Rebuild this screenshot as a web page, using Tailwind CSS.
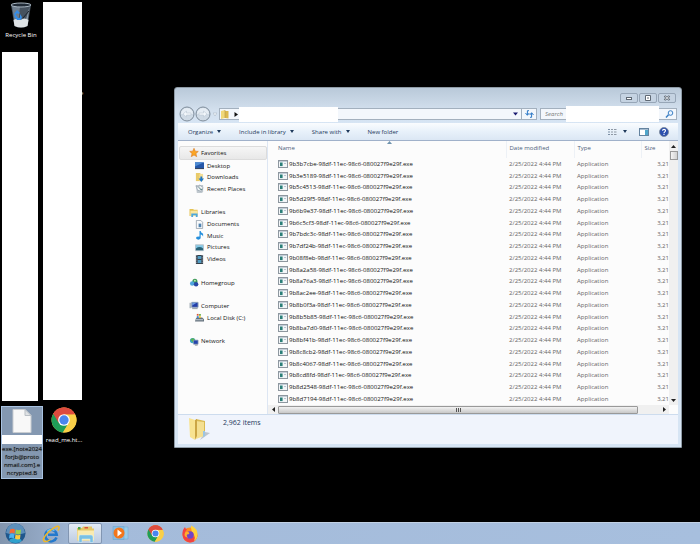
<!DOCTYPE html>
<html lang="en">
<head>
    <meta charset="UTF-8">
    <meta name="viewport" content="width=device-width, initial-scale=1.0">
    <title>Desktop</title>
    <script src="https://cdn.jsdelivr.net/npm/@tailwindcss/browser@4"></script>
</head>
<body class="bg-black min-h-screen flex flex-col overflow-hidden font-['Open_Sans',sans-serif] font-medium text-[6px] leading-[10px] text-black">

    <!-- Shared icons -->
    <svg class="hidden">
        <symbol id="chrome" viewBox="0 0 48 48">
            <circle cx="24" cy="24" r="23" fill="#f6c944"/>
            <path d="M24 24 4.1 12.5A23 23 0 0 1 43.9 12.5Z" fill="#dd4b3e"/>
            <path d="M4.1 12.5A23 23 0 0 0 22 47L33 29 24 24Z" fill="#1f9d58"/>
            <path d="M24 13.5H44.5A23 23 0 0 1 22 47L33 29Z" fill="#f9cf48"/>
            <path d="M4.1 12.5A23 23 0 0 1 44.5 13.5H24L14 29Z" fill="#dd4b3e"/>
            <circle cx="24" cy="24" r="10.8" fill="#fff"/>
            <circle cx="24" cy="24" r="8.6" fill="#4a86ee"/>
        </symbol>
        <symbol id="exe" viewBox="0 0 10 8">
            <rect x=".5" y=".5" width="9" height="7" fill="#f3f6f8" stroke="#8e979f"/>
            <rect x="1" y="1" width="8" height="1" fill="#c4ced8"/>
            <rect x="2" y="2.5" width="2.6" height="3.6" fill="#2b7f78"/>
            <rect x="6" y="3" width="2" height="1" fill="#b9c4d2"/>
        </symbol>
    </svg>

    <main class="relative flex-1">
        <!-- Desktop icons -->
        <a href="#" class="absolute left-[1px] top-[2px] w-10 flex flex-col items-center gap-[2px] text-white text-center">
            <svg class="w-6 h-[26px]" viewBox="0 0 24 26">
                <path d="M2 3h20l-3.5 21q-6.500 3-13 0Z" fill="#46525f"/>
                <path d="M3 4h8L9 24l-3-1Z" fill="#8292a2" opacity=".7"/>
                <path d="M20.500 5 15 24l3-1Z" fill="#9aa8b5" opacity=".8"/>
                <ellipse cx="12" cy="3" rx="10" ry="2" fill="#202a36" stroke="#a9b6c2"/>
                <path d="M4.500 18q3-2 7 0 4-3 8 0l-1 6q-6.500 3-13 0Z" fill="#dfe3e6"/>
                <path d="m5 12 3-4 3 3-2 1-1-1-2 3ZM5 14l2-1 2 3h2v2H8ZM11 12l2 3-1 3-2-1 1-2Z" fill="#348de8"/>
                <path d="m20 9-6 7" stroke="#1b222b"/>
            </svg>
            <span class="whitespace-nowrap">Recycle Bin</span>
        </a>
        <div class="absolute left-[2px] top-[52px] w-9 h-[349px] bg-white"></div>
        <span class="absolute left-20 top-[88px] text-[#ccc]">e</span>
        <div class="absolute left-[43px] top-[2px] w-[39px] h-[398px] bg-white"></div>

        <a href="#" class="absolute left-[1px] top-[406px] w-[42px] h-[73px] flex flex-col items-center pt-[2px] bg-[#8498b1] border border-[#a9c3e2] text-center">
            <svg class="w-5 h-6 shrink-0" viewBox="0 0 20 24">
                <path d="M1 .5h12l6 6v17H1Z" fill="#f8f8f8" stroke="#c9cdd1"/>
                <path d="M13 .5v6h6Z" fill="#dfe2e5" stroke="#b9bfc5"/>
            </svg>
            <span class="w-full h-[9px] mt-[2px] bg-white shrink-0"></span>
            <span class="leading-[8px] pt-[1px] whitespace-nowrap text-[#0a1320] [text-shadow:0_0_1px_#000,0_0_1px_#fff]">exe.[note2024<br>forjb@proto<br>nmail.com].e<br>ncrypted.B</span>
        </a>
        <a href="#" class="absolute left-[43px] top-[407px] w-[42px] flex flex-col items-center gap-[2px] text-white">
            <svg class="w-[26px] h-[26px]"><use href="#chrome"/></svg>
            <span class="whitespace-nowrap">read_me.ht...</span>
        </a>

        <!-- Explorer window -->
        <section class="absolute left-[174px] right-[18px] top-[87px] flex flex-col rounded-t-[3px] border border-[#8f9ba6] px-[3px] pb-[3px] bg-linear-to-b from-[#b9c9d9] from-0% via-[#d2dfed] via-6% to-[#d7e5f4] to-10%">
            <header class="flex justify-end items-center gap-[1px] h-[17px] pt-[3px] pr-[2px]">
                <button aria-label="Minimize" class="w-[18px] h-[10px] rounded-[2px] border border-[#97a6b7] bg-[#c5d3e2] flex items-center justify-center"><svg class="w-2 h-2" viewBox="0 0 8 8"><rect x="1.500" y="3.500" width="5" height="2" fill="#fff" stroke="#5f6974"/></svg></button>
                <button aria-label="Maximize" class="w-[18px] h-[10px] rounded-[2px] border border-[#97a6b7] bg-[#c5d3e2] flex items-center justify-center"><svg class="w-2 h-2" viewBox="0 0 8 8"><path d="M1.500 1.500h5v5h-5ZM3 4h2" fill="#fff" stroke="#5f6974"/></svg></button>
                <button aria-label="Close" class="w-[18px] h-[10px] rounded-[2px] border border-[#97a6b7] bg-[#c5d3e2] flex items-center justify-center"><svg class="w-2 h-2" viewBox="0 0 8 8"><path d="m1.500 2 5 4m0-4-5 4" stroke="#5f6974" stroke-width="2.200"/><path d="m2 2.400 4 3.200m0-3.200L2 5.600" stroke="#fff" stroke-width=".7"/></svg></button>
            </header>

            <!-- Address bar -->
            <div class="flex items-center h-[18px] pl-[1px] pr-[1px]">
                <button aria-label="Back"><svg class="w-4 h-4" viewBox="0 0 16 16"><circle cx="8" cy="8" r="7" fill="#cfdae5" stroke="#7e8c9a"/><path d="M2 8a6 6 0 0 1 12 0Z" fill="#e6edf4"/><path d="m4 8 3.500-3v2H12v2H7.500v2Z" fill="#f3f7fb" stroke="#b4c1ce" stroke-width=".5"/></svg></button>
                <button aria-label="Forward"><svg class="w-4 h-4" viewBox="0 0 16 16"><circle cx="8" cy="8" r="7" fill="#cfdae5" stroke="#7e8c9a"/><path d="M2 8a6 6 0 0 1 12 0Z" fill="#e6edf4"/><path d="m12 8-3.500-3v2H4v2h4.500v2Z" fill="#f3f7fb" stroke="#b4c1ce" stroke-width=".5"/></svg></button>
                <button aria-label="Recent pages" class="px-[2px]"><svg class="w-1 h-1" viewBox="0 0 4 4"><path d="M0 1h4L2 4Z" fill="#f0f5fa" stroke="#a5b1be" stroke-width=".5"/></svg></button>
                <div class="flex-1 flex items-center h-3 border border-[#a3b0be] bg-[#f3f7fc] pl-[1px]">
                    <svg class="w-2 h-[9px]" viewBox="0 0 8 9"><path d="M0 1 4 0v8L0 9Z" fill="#f0d878"/><path d="M4 1h3.500v7.500L4 8Z" fill="#dcb94e"/><path d="M4 0v8" stroke="#b8984a" stroke-width=".6"/></svg>
                    <svg class="w-1 h-[5px] ml-[5px]" viewBox="0 0 4 5"><path d="M.5 0v5L4 2.500Z" fill="#111"/></svg>
                    <input aria-label="Address" class="w-[99px] h-[15px] ml-[1px] bg-white outline-none">
                    <button aria-label="Previous locations" class="ml-auto pr-[3px]"><svg class="w-[5px] h-1" viewBox="0 0 5 4"><path d="M0 .5h5L2.500 3.500Z" fill="#191970"/></svg></button>
                </div>
                <button aria-label="Refresh" class="w-[15px] h-3 border border-l-0 border-[#a3b0be] bg-[#f3f7fc] flex items-center justify-center"><svg class="w-[9px] h-2" viewBox="0 0 9 8"><path d="M4 .7H2.400V5M.5 3l1.900 2.300L4.300 3" fill="none" stroke="#2c78c6"/><path d="M5 7.300h1.600V3M4.700 5l1.900-2.300L8.500 5" fill="none" stroke="#2c78c6"/></svg></button>
                <label class="flex items-center w-[137px] h-3 ml-[3px] pl-1 border border-[#a3b0be] bg-[#f3f7fc]">
                    <input type="text" aria-label="Search" placeholder="Search" class="w-[21px] shrink-0 italic outline-none placeholder:text-[#777]">
                    <span class="flex-1 h-4 bg-white"></span>
                    <svg class="w-[17px] h-2" viewBox="0 0 17 8" fill="none" stroke="#3b7fc4"><circle cx="11.500" cy="3" r="2.300" fill="#eaf4ff"/><path d="M9.500 4.800 7 7.500" stroke-width="1.500"/></svg>
                </label>
            </div>

            <!-- Toolbar -->
            <nav class="flex items-center h-[18px] bg-linear-to-b from-[#fafcfe] via-[#e8f1fa] to-[#dbe7f4] border-b border-[#a0b1ca] pl-[10px] pr-[9px] text-[#1e395b]">
                <button class="flex items-center gap-1 mr-[18px]">Organize <svg class="w-1 h-[3px]" viewBox="0 0 4 3"><path d="M0 0h4L2 3Z" fill="#1e395b"/></svg></button>
                <button class="flex items-center gap-1 mr-[18px]">Include in library <svg class="w-1 h-[3px]" viewBox="0 0 4 3"><path d="M0 0h4L2 3Z" fill="#1e395b"/></svg></button>
                <button class="flex items-center gap-1 mr-[18px]">Share with <svg class="w-1 h-[3px]" viewBox="0 0 4 3"><path d="M0 0h4L2 3Z" fill="#1e395b"/></svg></button>
                <button>New folder</button>
                <button aria-label="Change view" class="ml-auto flex items-center gap-[6px]"><svg class="w-[9px] h-2" viewBox="0 0 9 8"><path d="M0 1.500h2M0 4h2M0 6.500h2" stroke="#7a8ea4"/><path d="M3 1.500h2m1 0h2.500M3 4h2m1 0h2.500M3 6.500h2m1 0h2.500" stroke="#8f99a5"/></svg><svg class="w-1 h-[3px]" viewBox="0 0 4 3"><path d="M0 0h4L2 3Z" fill="#1e395b"/></svg></button>
                <button aria-label="Preview pane" class="ml-3"><svg class="w-[10px] h-2" viewBox="0 0 10 8"><rect x=".5" y=".5" width="9" height="7" fill="#fff" stroke="#64839f"/><path d="M1 1h8v1H1Z" fill="#a7bdd1"/><path d="M6 2h3v5H6Z" fill="#4fa6cb"/></svg></button>
                <button aria-label="Help" class="ml-[10px]"><svg class="w-[10px] h-[10px]" viewBox="0 0 10 10"><circle cx="5" cy="5" r="4.500" fill="#2b4fae" stroke="#7a8796" stroke-width=".8"/><path d="M3.500 3.800C3.600 1.900 6.600 2 6.500 3.800 6.400 5 5 4.800 5 6.200M5 7v1" fill="none" stroke="#fff" stroke-width="1.100"/></svg></button>
            </nav>

            <div class="flex h-[273px] bg-[#fcfcfc]">
                <!-- Navigation pane -->
                <aside class="w-[90px] shrink-0 border-r border-[#dde6f3] pt-[5px] text-[#111]">
                    <ul class="flex flex-col h-[201px]">
                        <li class="flex-1 flex items-center gap-[2px] ml-[1px] pl-[9px] rounded-[2px] border border-[#dcdcdc] bg-linear-to-b from-[#f6f6f6] to-[#e8e8e8]"><svg class="w-[10px] h-[9px]" viewBox="0 0 10 10"><path d="m5 .3 1.400 3.200 3.400.3-2.600 2.300.8 3.500L5 7.800 2 9.600l.8-3.500L.2 3.800l3.400-.3Z" fill="#fba625" stroke="#d8761d" stroke-width=".6"/></svg><a href="#">Favorites</a></li>
                        <li class="flex-1 flex items-center gap-[3px] pl-[17px]"><svg class="w-[9px] h-[9px]" viewBox="0 0 10 10"><path d="M0 1.500h10v7H0Z" fill="#2557a8"/><path d="M0 1.500h10L0 6Z" fill="#4d8ad2"/><path d="M0 8h10v1H0Z" fill="#26344a"/></svg><a href="#">Desktop</a></li>
                        <li class="flex-1 flex items-center gap-[3px] pl-[17px]"><svg class="w-[9px] h-[9px]" viewBox="0 0 10 10"><path d="M1 0h5v9H1Z" fill="#e9cb6a"/><path d="M5 1h4v8H5Z" fill="#f4df98"/><path d="M6 4h2v2h2L7 10 4 6h2Z" fill="#1f78c7"/></svg><a href="#">Downloads</a></li>
                        <li class="flex-1 flex items-center gap-[3px] pl-[17px]"><svg class="w-[9px] h-[9px]" viewBox="0 0 10 10"><path d="M1 1h8v7L8 10H2Z" fill="#c0c8ce"/><path d="m1 2 3 2 1-3 4 3-2 4-4-1Z" fill="#eff3f5" stroke="#81909c" stroke-width=".6"/><path d="m5 4 1 2h2" fill="none" stroke="#477"/></svg><a href="#">Recent Places</a></li>
                        <li class="flex-1"></li>
                        <li class="flex-1 flex items-center gap-[2px] pl-[11px]"><svg class="w-[10px] h-[9px]" viewBox="0 0 10 10"><path d="M0 1h4l1 1h4v7H0Z" fill="#e5c456"/><path d="M1 3h8v6H1Z" fill="#f7e7a2"/><path d="M2 6h7v4H7V8H4v2H2Z" fill="#4ca7dc"/></svg><a href="#">Libraries</a></li>
                        <li class="flex-1 flex items-center gap-[3px] pl-[17px]"><svg class="w-[9px] h-[9px]" viewBox="0 0 10 10"><path d="M1.500.5h5l2 2v7h-7Z" fill="#f9fafb" stroke="#8795a2" stroke-width=".8"/><path d="M4 4h3v4H4Z" fill="#5184b1"/></svg><a href="#">Documents</a></li>
                        <li class="flex-1 flex items-center gap-[3px] pl-[17px]"><svg class="w-[9px] h-[9px]" viewBox="0 0 10 10"><path d="M5 0h1.300q0 2 2.700 3v3Q8 4 6.300 4v4Q5 10 3 9.500 0 8.500 2 6.500L5 6Z" fill="#258fdc"/></svg><a href="#">Music</a></li>
                        <li class="flex-1 flex items-center gap-[3px] pl-[17px]"><svg class="w-[9px] h-[9px]" viewBox="0 0 10 10"><path d="M.5 2h9v6.500h-9Z" fill="#85c9e7" stroke="#b8c1c7"/><path d="M1 6q4-3 8 0v2H1Z" fill="#2a6478"/></svg><a href="#">Pictures</a></li>
                        <li class="flex-1 flex items-center gap-[3px] pl-[17px]"><svg class="w-[9px] h-[9px]" viewBox="0 0 10 10"><path d="M1 0h8v10H1Z" fill="#34404a"/><path d="M3 1h4v3.500H3ZM3 5.500h4V9H3Z" fill="#529dc4"/><path d="M2 0v10M8 0v10" stroke="#ccd" stroke-width=".8" stroke-dasharray="1 1"/></svg><a href="#">Videos</a></li>
                        <li class="flex-1"></li>
                        <li class="flex-1 flex items-center gap-[2px] pl-[11px]"><svg class="w-[10px] h-[9px]" viewBox="0 0 10 10"><circle cx="6" cy="3.500" r="2.800" fill="#3d9a58"/><circle cx="3" cy="6" r="2.500" fill="#4fa5dc"/><circle cx="7.300" cy="7" r="2.500" fill="#2848a5"/><circle cx="6" cy="3" r="1" fill="#c8edbc"/></svg><a href="#">Homegroup</a></li>
                        <li class="flex-1"></li>
                        <li class="flex-1 flex items-center gap-[2px] pl-[11px]"><svg class="w-[10px] h-[9px]" viewBox="0 0 10 10"><path d="M0 2h2v6H0Z" fill="#aab5bd"/><path d="M2.500 1.500h7V7h-7Z" fill="#233ea9" stroke="#8fa3b6"/><path d="M3 2h5L3 5Z" fill="#6e9be0"/><path d="M3 8h6v1H3Z" fill="#89949c"/></svg><a href="#">Computer</a></li>
                        <li class="flex-1 flex items-center gap-[3px] pl-[17px]"><svg class="w-[9px] h-[9px]" viewBox="0 0 10 10"><path d="m1 6 1-1h6l2 2v2.500H0Z" fill="#66737e"/><path d="M1 7h8v1H1Z" fill="#ced8df"/><path d="M2 1h2v2H2Z" fill="#db5638"/><path d="M4.500 1h2v2h-2Z" fill="#65ae45"/><path d="M2 3.500h2v2H2Z" fill="#3980d0"/><path d="M4.500 3.500h2v2h-2Z" fill="#f0c22e"/></svg><a href="#">Local Disk (C:)</a></li>
                        <li class="flex-1"></li>
                        <li class="flex-1 flex items-center gap-[2px] pl-[11px]"><svg class="w-[10px] h-[9px]" viewBox="0 0 10 10"><circle cx="3.500" cy="4" r="3" fill="#3ca4c5"/><path d="M1 3q3-3 5 0L4 6Z" fill="#58b257"/><path d="M4.500 3.500h5V8h-5Z" fill="#2444ad" stroke="#8799b0" stroke-width=".8"/><path d="M6 9h3" stroke="#888"/></svg><a href="#">Network</a></li>
                    </ul>
                </aside>

                <!-- File list -->
                <div class="flex-1 min-w-0 flex flex-col">
                    <div class="flex flex-1 min-h-0">
                        <div class="relative flex-1 min-w-0 overflow-hidden">
                            <svg class="absolute left-[119px] top-0 w-[5px] h-[3px]" viewBox="0 0 5 3"><path d="M0 3 2.500 0 5 3Z" fill="#6f93ad"/></svg>
                            <table class="w-full h-[264px] table-fixed text-left text-[#666]">
                                <thead>
                                    <tr class="h-[17px] text-[#4c607a]">
                                        <th class="p-0 pl-[10px] align-top pt-[2px] font-medium">Name</th>
                                        <th class="w-[68px] p-0 pl-[3px] align-top pt-[2px] font-medium border-l border-[#edf1f6]">Date modified</th>
                                        <th class="w-[67px] p-0 pl-[3px] align-top pt-[2px] font-medium border-l border-[#edf1f6]">Type</th>
                                        <th class="w-[28px] p-0 pl-[3px] align-top pt-[2px] font-medium border-l border-[#edf1f6]">Size</th>
                                    </tr>
                                </thead>
                                <tbody id="files"></tbody>
                            </table>
                        </div>
                        <div class="w-[9px] flex flex-col items-center bg-[#f0f0f0] pt-[4px] pb-[3px]">
                            <svg class="w-[5px] h-[3px]" viewBox="0 0 5 3"><path d="M0 3 2.500 0 5 3Z" fill="#222"/></svg>
                            <span class="w-2 h-[9px] mt-[3px] border border-[#999] bg-linear-to-r from-[#f4f4f4] to-[#d2d2d2]"></span>
                            <svg class="w-[5px] h-[3px] mt-auto" viewBox="0 0 5 3"><path d="M0 0h5L2.500 3Z" fill="#222"/></svg>
                        </div>
                    </div>
                    <div class="flex h-[9px] mr-[9px] items-center bg-[#f0f0f0] pl-1 pr-[3px]">
                        <svg class="w-[3px] h-[5px]" viewBox="0 0 3 5"><path d="M3 0v5L0 2.500Z" fill="#222"/></svg>
                        <span class="flex-1 ml-[3px] mr-[25px] h-2 rounded-[1px] border border-[#999] bg-linear-to-b from-[#f2f2f2] to-[#c8c8c8] flex items-center justify-center gap-[1px]">
                            <i class="w-px h-1 bg-[#555]"></i><i class="w-px h-1 bg-[#555]"></i><i class="w-px h-1 bg-[#555]"></i>
                        </span>
                        <svg class="w-[3px] h-[5px]" viewBox="0 0 3 5"><path d="M0 0v5L3 2.500Z" fill="#222"/></svg>
                    </div>
                </div>
            </div>

            <!-- Details pane -->
            <footer class="flex h-[30px] border-t border-[#cddcee] bg-[#f0f4fc] pl-[11px] gap-[13px] text-[#1e395b]">
                <svg class="w-[21px] h-6 mt-[2px]" viewBox="0 0 21 24"><path d="m11 23 10-7-5-1Z" fill="#a7afb9" opacity=".7"/><path d="m7 2 9 2v14l-9 3Z" fill="#d9b951"/><path d="m7 4 8 1v14l-8 3Z" fill="#f4df91"/><path d="m0 1 6 2v20l-5-3Z" fill="#f8e391"/><path d="m6 3 2-1v17l-2 4Z" fill="#cba544"/><path d="M14 14v6l2-1v-5Z" fill="#9ac5e4"/></svg>
                <span class="pt-[3px] text-[7px] font-normal">2,962 items</span>
            </footer>
        </section>
    </main>

    <!-- Taskbar -->
    <nav class="flex items-center h-[22px] border-t border-[#c2d1e4] bg-linear-to-r from-[#8295ae] from-0% via-[#a4bbda] via-12% to-[#a7bfde]">
        <button aria-label="Start" class="ml-[5px] w-[21px]"><svg class="w-[21px] h-[21px]" viewBox="0 0 42 42"><circle cx="21" cy="21" r="20" fill="#20578c"/><path d="M2 20a19 19 0 0 1 38 0Q21 27 2 20Z" fill="#5d8fba"/><ellipse cx="21" cy="35" rx="12" ry="5" fill="#34b4dd" opacity=".8"/><path d="M10 13q5-3 10 0l-1 8q-5-3-10 0Z" fill="#f26a35"/><path d="M22 13q5 3 10 0l-1 9q-5 2-10-1Z" fill="#9bd04b"/><path d="M9 23q5-3 10 0l-1 8q-5-3-10 0Z" fill="#4ab3f0"/><path d="M21 23q5 3 10 0l-1 9q-5 2-10-1Z" fill="#fccb3e"/></svg></button>
        <button aria-label="Internet Explorer" class="ml-4 w-[18px]"><svg class="w-[18px] h-[18px]" viewBox="0 0 36 36"><path d="M29 25A11.500 11.500 0 1 1 29.500 19.500H12" fill="none" stroke="#2479cc" stroke-width="5"/><path d="M10 13q7-7 15-2" fill="none" stroke="#70c3f2" stroke-width="3"/><path d="M5 33Q-2 29 14 13 31-1 34 4q1 2-2 7M5 33q5 1 12-4" fill="none" stroke="#f2b823" stroke-width="3"/></svg></button>
        <button aria-label="Windows Explorer" class="ml-2 w-[34px] h-[21px] rounded-[2px] border border-[#8296b2] bg-linear-to-b from-[#e3ebf5] to-[#bdcce2] flex items-center justify-center"><svg class="w-[19px] h-[18px]" viewBox="0 0 38 36"><path d="M2 6h10l2-3h18v4h4v24H2Z" fill="#e5c868"/><path d="M4 4h5v5H4Z" fill="#47a34b"/><path d="M17 4h7v3h-7Z" fill="#d9533a"/><path d="M3 11h33v20H3Z" fill="#faebb0"/><path d="M8 20h22q4 0 4 4v11h-6v-7H12v7H6V24q0-4 2-4Z" fill="#7ac0e3" stroke="#d7eef9"/></svg></button>
        <button aria-label="Media Player" class="ml-[10px] w-[17px]"><svg class="w-[17px] h-[17px]" viewBox="0 0 34 34"><path d="M10 4h22v24H10Z" fill="#9bcdea" stroke="#6ca9d0"/><path d="M2 3h22v26H2Z" fill="#87bde2" stroke="#64a2cd"/><circle cx="14" cy="16" r="11" fill="#f3761b"/><path d="M11 9v14l9-7Z" fill="#fff"/></svg></button>
        <button aria-label="Chrome" class="ml-[18px] w-[17px]"><svg class="w-[17px] h-[17px]"><use href="#chrome"/></svg></button>
        <button aria-label="Firefox" class="ml-[17px] w-[18px]"><svg class="w-[18px] h-[18px]" viewBox="0 0 36 36"><circle cx="18" cy="20" r="15" fill="#ff8b22"/><path d="M3 20Q2 10 8 4q1 4 4 5-4 3-4 8 1 9 10 10 8-1 10-8l5 2q-2 13-15 14Q5 34 3 20Z" fill="#f24343"/><path d="M20 1q14 6 13 20-1 8-7 11 3-7 0-13-7-7-6-18Z" fill="#ffd23c"/><circle cx="18" cy="20" r="7.500" fill="#7044c8"/><path d="M8 15q5-3 9 1-1 3-5 3-2 4 3 6-7 0-8-5Z" fill="#ffae2b"/></svg></button>
    </nav>

    <script>
        const ids = [
            '9b3b7cbe', '9b3e5189', '9b5c4513', '9b5d29f5', '9b6b9e37', '9b6c5cf3', '9b7bdc3c',
            '9b7df24b', '9b08f8eb', '9b8a2a58', '9b8a76a3', '9b8ac2ee', '9b8b0f3a', '9b8b5b85',
            '9b8ba7d0', '9b8bf41b', '9b8c8cb2', '9b8c4067', '9b8cd8fd', '9b8d2548', '9b8d7194',
        ];

        document.getElementById('files').innerHTML = ids.map((id) => `
            <tr>
                <td class="p-0 pl-[10px] text-[#111] whitespace-nowrap"><div class="flex items-center gap-[1px]"><svg class="w-[10px] h-2"><use href="#exe"/></svg>${id}-98df-11ec-98c6-080027f9e29f.exe</div></td>
                <td class="p-0 pl-[3px] whitespace-nowrap">2/25/2022 4:44 PM</td>
                <td class="p-0 pl-[3px]">Application</td>
                <td class="p-0 text-right whitespace-nowrap">3,21</td>
            </tr>`).join('');
    </script>
</body>
</html>
